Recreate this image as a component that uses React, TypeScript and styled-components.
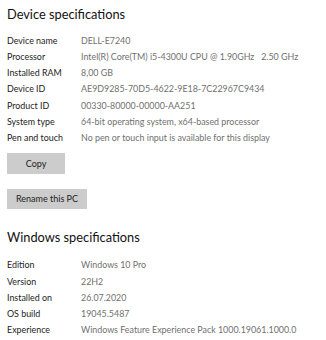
import React from "react";
import styled, { createGlobalStyle } from "styled-components";

const Global = createGlobalStyle`
  html, body { margin: 0; padding: 0; background: #ffffff; }
  body { font-family: "Lato", "Open Sans", sans-serif; }
`;

const Page = styled.div`
  padding: 2px 0 0 7px;
  display: flex;
  flex-direction: column;
`;

const Title = styled.h2<{ $top: number }>`
  margin: ${(p) => p.$top}px 0 0 0;
  font-size: 12.8px;
  font-weight: 400;
  line-height: 20px;
  color: #111;
`;

const SpecTable = styled.div<{ $top: number }>`
  margin-top: ${(p) => p.$top}px;
  display: grid;
  grid-template-columns: 74px 1fr;
  grid-auto-rows: 16.25px;
  align-items: center;
  font-size: 8.9px;
  white-space: nowrap;
`;

const Label = styled.div`
  color: #222;
`;

const Value = styled.div`
  color: #707070;
  white-space: pre;
`;

const Button = styled.button<{ $w: number; $h: number; $top: number }>`
  margin-top: ${(p) => p.$top}px;
  width: ${(p) => p.$w}px;
  height: ${(p) => p.$h}px;
  background: #cccccc;
  border: none;
  padding: 0;
  font-family: inherit;
  font-size: 9px;
  color: #222;
  align-self: flex-start;
`;

const device: [string, string][] = [
  ["Device name", "DELL-E7240"],
  ["Processor", "Intel(R) Core(TM) i5-4300U CPU @ 1.90GHz   2.50 GHz"],
  ["Installed RAM", "8,00 GB"],
  ["Device ID", "AE9D9285-70D5-4622-9E18-7C22967C9434"],
  ["Product ID", "00330-80000-00000-AA251"],
  ["System type", "64-bit operating system, x64-based processor"],
  ["Pen and touch", "No pen or touch input is available for this display"],
];

const windows: [string, string][] = [
  ["Edition", "Windows 10 Pro"],
  ["Version", "22H2"],
  ["Installed on", "26.07.2020"],
  ["OS build", "19045.5487"],
  ["Experience", "Windows Feature Experience Pack 1000.19061.1000.0"],
];

const Rows = ({ rows, top }: { rows: [string, string][]; top: number }) => (
  <SpecTable $top={top}>
    {rows.map(([l, v]) => (
      <React.Fragment key={l}>
        <Label>{l}</Label>
        <Value>{v}</Value>
      </React.Fragment>
    ))}
  </SpecTable>
);

export default function App() {
  return (
    <>
      <Global />
      <Page>
        <Title $top={2}>Device specifications</Title>
        <Rows rows={device} top={8} />
        <Button $w={58} $h={21} $top={7}>Copy</Button>
        <Button $w={80} $h={20} $top={15}>Rename this PC</Button>
        <Title $top={18}>Windows specifications</Title>
        <Rows rows={windows} top={10} />
      </Page>
    </>
  );
}
